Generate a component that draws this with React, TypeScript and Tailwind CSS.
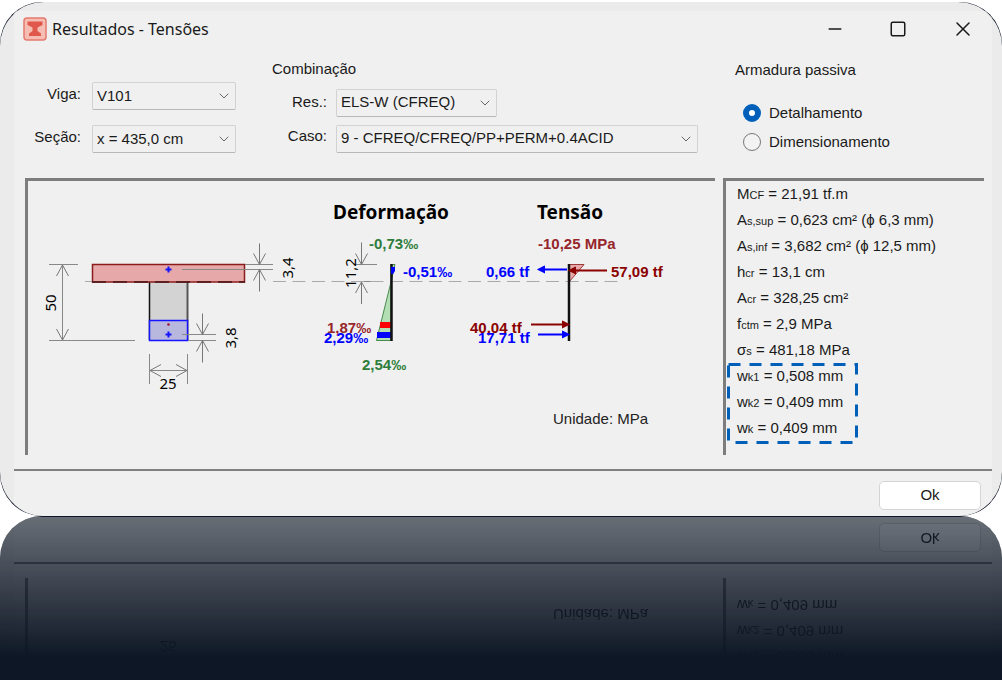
import { ReactNode, useId } from "react";
import { ChevronDown, Minus, Square, X } from "lucide-react";

type Result = { symbol: string; sub: string; value: string };

const results: Result[] = [
  { symbol: "M", sub: "CF", value: "21,91 tf.m" },
  { symbol: "A", sub: "s,sup", value: "0,623 cm² (ϕ 6,3 mm)" },
  { symbol: "A", sub: "s,inf", value: "3,682 cm² (ϕ 12,5 mm)" },
  { symbol: "h", sub: "cr", value: "13,1 cm" },
  { symbol: "A", sub: "cr", value: "328,25 cm²" },
  { symbol: "f", sub: "ctm", value: "2,9 MPa" },
  { symbol: "σ", sub: "s", value: "481,18 MPa" },
];

const crackWidths: Result[] = [
  { symbol: "w", sub: "k1", value: "0,508 mm" },
  { symbol: "w", sub: "k2", value: "0,409 mm" },
  { symbol: "w", sub: "k", value: "0,409 mm" },
];

function SelectField({
  label,
  value,
  labelClass,
  boxClass,
}: {
  label: string;
  value: string;
  labelClass: string;
  boxClass: string;
}) {
  const id = useId();
  return (
    <div className="flex items-center">
      <label htmlFor={id} className={`shrink-0 text-right ${labelClass}`}>
        {label}
      </label>
      <div className={`relative ${boxClass}`}>
        <select
          id={id}
          className="block h-7 w-full appearance-none rounded-xs border border-[#d2d2d2] border-b-[#b8b8b8] bg-[#f0f0f0] pl-1 pr-6"
        >
          <option>{value}</option>
        </select>
        <ChevronDown
          className="pointer-events-none absolute right-1 top-[6px] size-4 text-[#666]"
          strokeWidth={1.5}
        />
      </div>
    </div>
  );
}

function RadioField({ label, checked }: { label: string; checked?: boolean }) {
  return (
    <label className="flex items-center gap-2">
      <input
        type="radio"
        name="armadura"
        defaultChecked={checked}
        className="size-[18px] appearance-none rounded-full border border-[#777] bg-[#f3f3f3] checked:border-[6px] checked:border-[#005fb8] checked:bg-white"
      />
      {label}
    </label>
  );
}

function ResultLine({ symbol, sub, value }: Result) {
  return (
    <li className="whitespace-nowrap">
      {symbol}
      <span className="text-[11px] leading-none">{sub}</span> = {value}
    </li>
  );
}

// Open-headed dimension arrow with its tip at (x, y)
function Tip({ x, y, turn = 0, len = 0 }: { x: number; y: number; turn?: number; len?: number }) {
  return (
    <path
      d={`M-6 11L0 0L6 11M0 0V${len}`}
      transform={`translate(${x} ${y}) rotate(${turn})`}
      fill="none"
      stroke="#777"
    />
  );
}

// Small cross that marks the centroid of the bars
function Bar({ x, y }: { x: number; y: number }) {
  return <path d={`M${x - 3} ${y}h6M${x} ${y - 3}v6`} stroke="#1414ff" strokeWidth="2" />;
}

function Diagram() {
  return (
    <svg
      viewBox="0 0 687 274"
      preserveAspectRatio="xMinYMin meet"
      className="block h-[274px] w-full"
      fontFamily="'Liberation Sans', Arial, sans-serif"
      fontSize="15"
    >
      {/* cross section */}
      <rect x="121.5" y="101" width="38" height="58" fill="#d3d3d3" />
      <path d="M121.5 101V159" stroke="#111" strokeWidth="1.5" />
      <path d="M159.5 101V159" stroke="#555" strokeWidth="2" />
      <rect x="64.5" y="83.5" width="152" height="17.5" fill="#e6a8a8" stroke="#8c1c1c" strokeWidth="1.5" />
      <path d="M57 100.5H64" stroke="#aaa" />
      <path d="M64 101H217" stroke="#4a1414" strokeWidth="1.5" strokeDasharray="14 7" />
      <rect x="121.5" y="139.5" width="38" height="20" fill="#b8b8df" stroke="#1414ff" strokeWidth="1.5" />
      <circle cx="140.5" cy="143.5" r="1.3" fill="#a01030" />

      {/* dimension lines */}
      <g stroke="#888" fill="none">
        <path d="M21 83.5H50M21 159.5H107M34.5 83.5V159.5" />
        <path d="M217 83.5H245M154 88.5H245" />
        <path d="M154 153.5H188M160 159.5H188" />
        <path d="M121.5 173V203M159.5 173V203M121.5 189.5H159.5" />
        <path d="M326 83.5H349M326 100.5H349" />
      </g>
      <Tip x={34.5} y={84} />
      <Tip x={34.5} y={159} turn={180} />
      <Tip x={231.5} y={83.5} turn={180} len={21} />
      <Tip x={231.5} y={88.5} len={22} />
      <Tip x={174.5} y={153.5} turn={180} len={21} />
      <Tip x={174.5} y={159.5} len={22} />
      <Tip x={122} y={189.5} turn={-90} />
      <Tip x={159} y={189.5} turn={90} />
      <Tip x={333.5} y={83.5} turn={180} len={22} />
      <Tip x={333.5} y={101} len={22} />
      <Bar x={140.5} y={88.5} />
      <Bar x={140.5} y={153.5} />

      {/* neutral axis */}
      <path d="M245 100.5H595" stroke="#aaa" strokeDasharray="13 6.5" />

      {/* strains */}
      <path d="M363 101L348.5 159.5H363Z" fill="#b4dfb4" stroke="#468a4e" />
      <path d="M363 83.5H367L363 101Z" fill="#b4dfb4" stroke="#468a4e" />
      <rect x="352" y="141" width="11" height="6" fill="#f00" />
      <rect x="349" y="151" width="14" height="6" fill="#00f" />
      <path d="M363.5 83V160" stroke="#111" strokeWidth="2.5" />
      <path d="M363 86H367V90L365 93H363Z" fill="#00f" />

      {/* stresses */}
      <path d="M541 83.5H556L541 101Z" fill="#e6a8a8" stroke="#9c3a3a" />
      <path d="M541 83V160" stroke="#111" strokeWidth="2.5" />
      <g stroke="#00f" fill="#00f" strokeWidth="2">
        <path d="M539 88.5H516M510 153.5H536" />
        <path d="M516 86L511 88.5L516 91ZM535 151L540 153.5L535 156Z" />
      </g>
      <g stroke="#8b0000" fill="#8b0000" strokeWidth="2">
        <path d="M579 89.5H546M503 143.5H536" />
        <path d="M547 87L542 89.5L547 92ZM535 141L540 143.5L535 146Z" />
      </g>

      <g fontFamily="'Noto Sans', sans-serif" fontSize="15" textAnchor="middle">
        <text transform="translate(28 122) rotate(-90)">50</text>
        <text transform="translate(265 87) rotate(-90)">3,4</text>
        <text transform="translate(208 157) rotate(-90)">3,8</text>
        <text transform="translate(328 92) rotate(-90)">11,2</text>
        <text x="140" y="208">25</text>
      </g>
      <g fontFamily="'Noto Sans', sans-serif" fontSize="19" fontWeight="700" textAnchor="middle">
        <text x="363" y="38">Deformação</text>
        <text x="542" y="38">Tensão</text>
      </g>
      <g fontWeight="700">
        <g fill="#2e7d3a">
          <text x="341" y="68">-0,73‰</text>
          <text x="334" y="189">2,54‰</text>
        </g>
        <g fill="#96262b">
          <text x="299" y="152">1,87‰</text>
          <text x="510" y="68">-10,25 MPa</text>
        </g>
        <g fill="#8b0000">
          <text x="583" y="96">57,09 tf</text>
          <text x="442" y="152">40,04 tf</text>
        </g>
        <g fill="#00f">
          <text x="375" y="96">-0,51‰</text>
          <text x="296" y="162">2,29‰</text>
          <text x="458" y="96">0,66 tf</text>
          <text x="450" y="162">17,71 tf</text>
        </g>
      </g>
      <text x="525" y="243" fill="#222">
        Unidade: MPa
      </text>
    </svg>
  );
}

function TitleBar() {
  return (
    <header className="flex h-9 items-center justify-between pl-[9px] pr-[17px]">
      <div className="flex items-center gap-[5px]">
        <svg viewBox="0 0 24 24" className="size-6">
          <rect x="1" y="1" width="22" height="22" rx="3" fill="#f6bdb3" stroke="#e37a6d" strokeWidth="1.5" />
          <path
            d="M4.5 4.5H19.5V8L14.5 10.5V14L18 16.5V19H6V16.5L9.5 14V10.5L4.5 8Z"
            fill="#e0584b"
          />
        </svg>
        <h1 className="font-['Noto_Sans',sans-serif] text-[16px]">Resultados - Tensões</h1>
      </div>
      <div className="flex items-center gap-11">
        <button type="button" aria-label="Minimizar">
          <Minus className="size-5" strokeWidth={1.7} />
        </button>
        <button type="button" aria-label="Maximizar">
          <Square className="size-[18px]" strokeWidth={2} />
        </button>
        <button type="button" aria-label="Fechar">
          <X className="size-6" strokeWidth={1.5} />
        </button>
      </div>
    </header>
  );
}

function Panel({ className, children }: { className: string; children: ReactNode }) {
  return <section className={`border-l-3 border-[#7d7d7d] ${className}`}>{children}</section>;
}

function Footer() {
  return (
    <footer className="flex h-[47px] shrink-0 items-start justify-end border-t-2 border-[#808080] pr-[11px] pt-[10px]">
      <button type="button" className="h-[29px] w-[102px] rounded-[5px] border border-[#d4d4d4] bg-white">
        Ok
      </button>
    </footer>
  );
}

function ResultsDialog() {
  return (
    <div className="rounded-[42px] bg-[#0e1725]">
      <main className="overflow-hidden rounded-[44px] bg-[#ebebeb] pl-[14px] pr-[10px] pt-[9px]">
        <div className="bg-[#f0f0f0]">
          <TitleBar />
          <form className="flex h-[131px] gap-2 pl-[11px] pr-2">
            <div className="flex flex-1 gap-9">
              <div className="flex flex-col gap-[15px] pt-[35px]">
                <SelectField label="Viga:" value="V101" labelClass="w-14 pb-1" boxClass="ml-[11px] w-[144px]" />
                <SelectField label="Seção:" value="x = 435,0 cm" labelClass="w-14 pb-1" boxClass="ml-[11px] w-[144px]" />
              </div>
              <fieldset className="flex-1 pr-[17px] pt-[11px]">
                <legend className="contents">Combinação</legend>
                <div className="mt-2 flex flex-col gap-2">
                  <SelectField label="Res.:" value="ELS-W (CFREQ)" labelClass="w-[55px]" boxClass="ml-[9px] w-[161px]" />
                  <SelectField
                    label="Caso:"
                    value="9 - CFREQ/CFREQ/PP+PERM+0.4ACID"
                    labelClass="w-[55px] pb-1"
                    boxClass="ml-[9px] flex-1"
                  />
                </div>
              </fieldset>
            </div>
            <fieldset className="w-[261px] pl-3 pt-3">
              <legend className="contents">Armadura passiva</legend>
              <div className="mt-5 flex flex-col gap-[7px] pl-2">
                <RadioField label="Detalhamento" checked />
                <RadioField label="Dimensionamento" />
              </div>
            </fieldset>
          </form>
          <div className="flex gap-2 pb-[14px] pl-[11px] pr-2">
            <Panel className="flex-1 border-t-3">
              <Diagram />
            </Panel>
            <Panel className="w-[261px] border-t-3">
              <ul className="pl-[11px] leading-[26px]">
                {results.map((r) => (
                  <ResultLine key={r.symbol + r.sub} {...r} />
                ))}
              </ul>
              <div className="relative ml-[1px] w-[131px] pb-[3px] pl-[10px]">
                <ul className="leading-[26px]">
                  {crackWidths.map((r) => (
                    <ResultLine key={r.sub} {...r} />
                  ))}
                </ul>
                <svg className="absolute inset-0 size-full overflow-visible">
                  <rect
                    x="1.5"
                    y="1.5"
                    width="128"
                    height="78"
                    fill="none"
                    stroke="#005fb8"
                    strokeWidth="3"
                    strokeDasharray="12 9"
                  />
                </svg>
              </div>
            </Panel>
          </div>
          <Footer />
        </div>
      </main>
    </div>
  );
}

// Mirrored lower edge of the window, fading into the dark floor
function Reflection() {
  return (
    <div inert className="flex flex-1 overflow-hidden rounded-t-[42px] bg-[#0e1725] pt-px">
      <div className="flex flex-1 -scale-y-100 flex-col justify-end overflow-hidden bg-[#ebebeb] pl-[14px] pr-[10px] mask-t-from-0% mask-t-to-[142px] opacity-40">
        <div className="flex h-[102px] shrink-0 items-end gap-2 bg-[#f0f0f0] pb-[14px] pl-[11px] pr-2">
          <Panel className="flex h-full flex-1 flex-col justify-end">
            <p className="pl-[132px] leading-5">25</p>
            <p className="pb-[26px] pl-[525px] pt-3 leading-5">Unidade: MPa</p>
          </Panel>
          <Panel className="flex h-full w-[261px] flex-col justify-end">
            <ul className="pb-[14px] pl-[11px] leading-[26px]">
              {crackWidths.map((r) => (
                <ResultLine key={r.sub} {...r} />
              ))}
            </ul>
          </Panel>
        </div>
        <div className="bg-[#f0f0f0]">
          <Footer />
        </div>
      </div>
    </div>
  );
}

export default function App() {
  return (
    <div className="flex min-h-screen flex-col bg-white pt-[2px] font-['Liberation_Sans',Arial,sans-serif] text-[15px] text-[#1a1a1a]">
      <ResultsDialog />
      <Reflection />
    </div>
  );
}
